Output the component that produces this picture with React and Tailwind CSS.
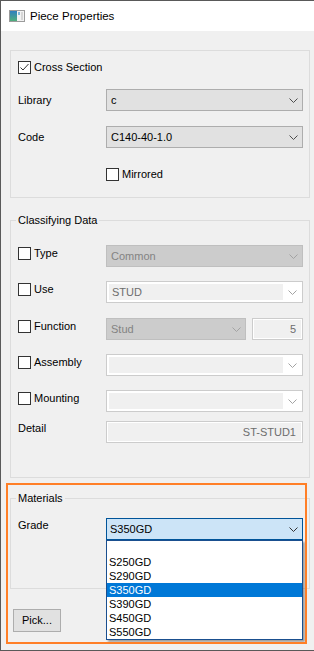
import React from "react";

const Chevron = ({ color = "#4d4d4d" }) => (
  <svg width="9" height="5" viewBox="0 0 9 5" className="shrink-0">
    <polyline points="0.5,0.5 4.5,4.5 8.5,0.5" fill="none" stroke={color} strokeWidth="1" />
  </svg>
);

const Checkbox = ({ checked }) => (
  <div className="w-[13px] h-[13px] border border-[#333333] bg-white shrink-0 flex items-center justify-center">
    {checked && (
      <svg width="11" height="11" viewBox="0 0 11 11">
        <polyline points="1.5,5.5 4,8 9.5,2" fill="none" stroke="#333333" strokeWidth="1" />
      </svg>
    )}
  </div>
);

const TitleIcon = () => (
  <svg width="16" height="12" viewBox="0 0 16 12" className="shrink-0">
    <defs>
      <linearGradient id="tg" x1="0" y1="0" x2="0" y2="1">
        <stop offset="0" stopColor="#2f7fc0" />
        <stop offset="1" stopColor="#4fae7c" />
      </linearGradient>
    </defs>
    <rect x="0.5" y="0.5" width="15" height="11" fill="#f2f2f2" stroke="#9b9b9b" />
    <rect x="1" y="1" width="7" height="10" fill="url(#tg)" />
    <rect x="9" y="2" width="2" height="3" fill="#7fb6d8" />
    <rect x="12" y="2" width="2" height="8" fill="#d6d6d6" />
  </svg>
);

const Combo = ({ value }) => (
  <div className="h-[22px] w-[197px] flex items-center border border-[#adadad] bg-[#e1e1e1] pl-[4px] pr-[4px]">
    <span className="flex-1">{value}</span>
    <Chevron color="#4d4d4d" />
  </div>
);

const DisabledCombo = ({ value, w = "w-[197px]" }) => (
  <div className={`h-[22px] ${w} flex items-center border border-[#bfbfbf] bg-[#cccccc] pl-[4px] pr-[4px] text-[#838383]`}>
    <span className="flex-1">{value}</span>
    <Chevron color="#a3a3a3" />
  </div>
);

const EditCombo = ({ value }) => (
  <div className="h-[22px] w-[197px] flex border border-[#cccccc] bg-white p-[2px] pr-0">
    <div className="flex-1 bg-[#f0f0f0] flex items-center pl-[3px] text-[#6d6d6d]">{value}</div>
    <div className="w-[19px] flex items-center justify-center">
      <Chevron color="#a3a3a3" />
    </div>
  </div>
);

const TextBox = ({ value, w }) => (
  <div className={`h-[22px] ${w} border border-[#cccccc] bg-white p-[1px]`}>
    <div className="h-full bg-[#f0f0f0] flex items-center justify-end pr-[5px] text-[#6d6d6d]">{value}</div>
  </div>
);

const CheckRow = ({ label, children, mt }) => (
  <div className={`flex items-start h-[22px] ${mt}`}>
    <div className="w-[88px] flex items-center gap-[3px] mt-[2px]">
      <Checkbox />
      <span>{label}</span>
    </div>
    {children}
  </div>
);

export default function App() {
  const items = ["", "S250GD", "S290GD", "S350GD", "S390GD", "S450GD", "S550GD"];
  return (
    <div className="relative w-[314px] h-[651px] bg-[#f0f0f0] border-t border-l border-b border-[#595959] font-['Liberation_Sans',Arial,sans-serif] text-[11px] leading-[13px] text-black overflow-hidden">
      <div className="h-[30px] bg-white flex items-center pl-[8px]">
        <TitleIcon />
        <span className="ml-[5px] text-[11.5px] leading-[14px]">Piece Properties</span>
      </div>

      <div className="pt-[19px] pl-[9px] flex flex-col">
        {/* Cross section group */}
        <div className="w-[300px] h-[148px] border border-[#dcdcdc] flex flex-col pl-[7px] pt-[10px]">
          <div className="h-[13px] flex items-center gap-[3px]">
            <Checkbox checked />
            <span>Cross Section</span>
          </div>
          <div className="mt-[15px] h-[22px] flex items-center">
            <span className="w-[88px]">Library</span>
            <Combo value="c" />
          </div>
          <div className="mt-[15px] h-[22px] flex items-center">
            <span className="w-[88px]">Code</span>
            <Combo value="C140-40-1.0" />
          </div>
          <div className="mt-[20px] h-[13px] flex items-center gap-[3px] pl-[88px]">
            <Checkbox />
            <span>Mirrored</span>
          </div>
        </div>

        {/* Classifying data */}
        <fieldset className="mt-[16px] w-[300px] border border-[#dcdcdc] pl-[7px] pt-[18px] pb-[34px]">
          <legend className="ml-[-2px] px-[2px] leading-[13px]">Classifying Data</legend>
          <CheckRow label="Type">
            <DisabledCombo value="Common" />
          </CheckRow>
          <CheckRow label="Use" mt="mt-[14px]">
            <EditCombo value="STUD" />
          </CheckRow>
          <CheckRow label="Function" mt="mt-[15px]">
            <DisabledCombo value="Stud" w="w-[140px]" />
            <div className="ml-[6px]">
              <TextBox value="5" w="w-[51px]" />
            </div>
          </CheckRow>
          <CheckRow label="Assembly" mt="mt-[14px]">
            <EditCombo value="" />
          </CheckRow>
          <CheckRow label="Mounting" mt="mt-[14px]">
            <EditCombo value="" />
          </CheckRow>
          <div className="mt-[9px] h-[22px] flex items-start">
            <span className="w-[88px] mt-[1px]">Detail</span>
            <TextBox value="ST-STUD1" w="w-[197px]" />
          </div>
        </fieldset>

        {/* Materials */}
        <fieldset className="mt-[14px] w-[300px] border border-[#dcdcdc] pl-[7px] pt-[13px] pb-[48px]">
          <legend className="ml-[-2px] px-[2px] leading-[13px]">Materials</legend>
          <div className="h-[22px] flex items-start">
            <span className="w-[88px] mt-[1px]">Grade</span>
            <div className="relative">
              <div className="h-[22px] w-[197px] flex items-center border border-[#005499] bg-[#cce4f7] pl-[3px] pr-[4px]">
                <span className="flex-1">S350GD</span>
                <Chevron color="#333333" />
              </div>
              <div className="absolute left-0 top-[22px] w-[197px] h-[100px] border border-[#1a4f8f] bg-white shadow-[2px_2px_2px_rgba(0,0,0,0.35)] z-10">
                {items.map((it, i) => (
                  <div
                    key={i}
                    className={`h-[14px] leading-[14px] pl-[2px] ${it === "S350GD" ? "bg-[#0078d7] text-white" : ""}`}
                  >
                    {it}
                  </div>
                ))}
              </div>
            </div>
          </div>
        </fieldset>

        <div className="mt-[20px] ml-[3px]">
          <button className="w-[48px] h-[23px] border border-[#adadad] bg-[#e1e1e1] flex items-center justify-center">
            Pick...
          </button>
        </div>
      </div>

      <div className="absolute left-[5px] top-[482px] w-[301px] h-[161px] border-2 border-[#ff7f27] z-20 pointer-events-none" />
    </div>
  );
}
